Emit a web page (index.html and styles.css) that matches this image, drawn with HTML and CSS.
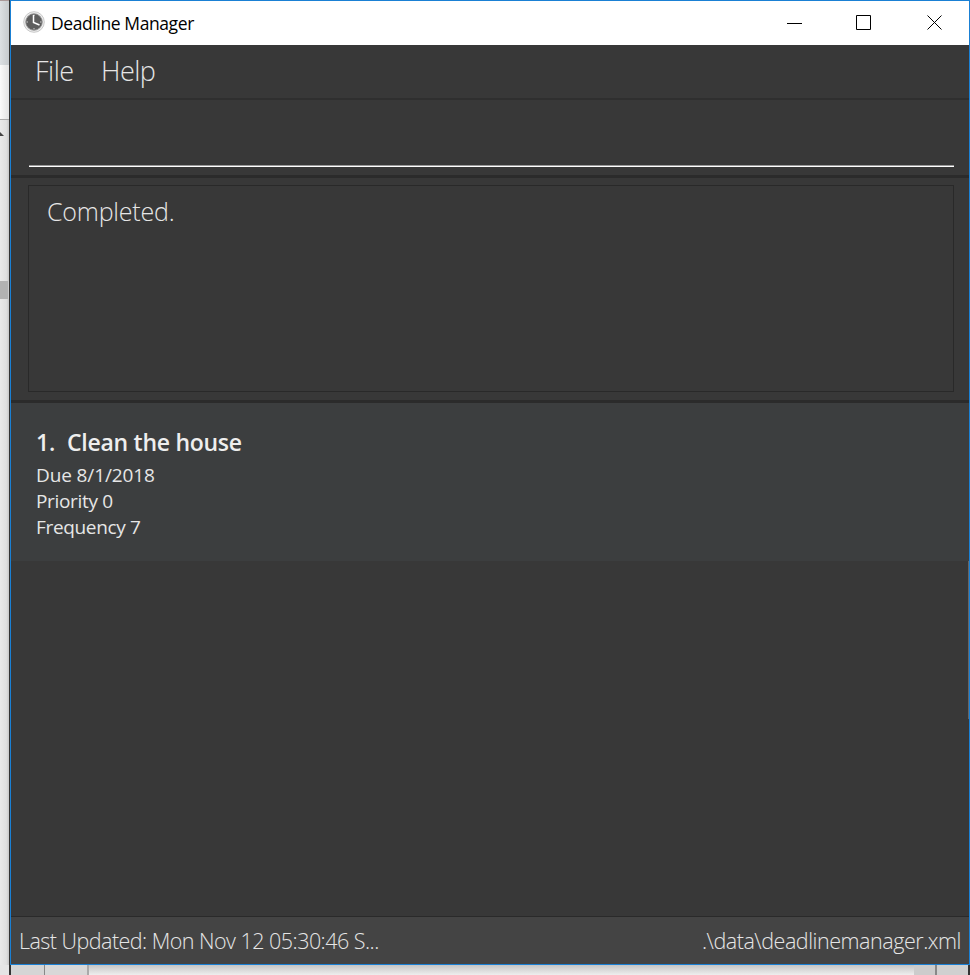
FILE: index.html
```html
<!DOCTYPE html>
<html lang="en">
<head>
<meta charset="utf-8">
<title>Deadline Manager</title>
<link rel="stylesheet" href="styles.css">
</head>
<body>
<div class="desktop">
  <div class="behind-left"><i class="panel-top"></i><i class="panel-line"></i><svg class="arrow" width="4" height="4" viewBox="0 0 4 4"><path d="M0 0L4 4H0Z" fill="#444"/></svg><i class="thumb"></i></div>
  <main class="window">
    <header class="titlebar">
      <svg class="clock" width="22" height="22" viewBox="0 0 22 22">
        <circle cx="11" cy="11" r="10.3" fill="#eee" stroke="#c9c9c9"/>
        <circle cx="11" cy="11" r="8.3" fill="#5e5e5e" stroke="#909090" stroke-width=".8"/>
        <path d="M11 3.500V5M11 17v1.500M3.500 11H5M17 11h1.500" stroke="#ccc" stroke-width="1"/>
        <path d="M10.500 4v7.500l6 2.500" fill="none" stroke="#fff" stroke-width="1.500"/>
      </svg>
      <h1 class="title"><span>Deadline Manager</span></h1>
      <div class="controls">
        <svg width="16" height="16" viewBox="0 0 16 16"><path d="M0 8.500H15" stroke="#000"/></svg>
        <svg width="16" height="16" viewBox="0 0 16 16"><path d="M.5 .5H14.500V14.500H.5Z" fill="none" stroke="#000"/></svg>
        <svg width="16" height="16" viewBox="0 0 16 16"><path d="M.5 .5L14.500 14.500M14.500 .5L.5 14.500" stroke="#000" stroke-width="1"/></svg>
      </div>
    </header>
    <nav class="menubar"><span class="file">File</span><span class="help">Help</span></nav>
    <section class="command"><div class="input"></div></section>
    <section class="result"><div class="result-box"><span>Completed.</span></div></section>
    <section class="list">
      <article class="card">
        <h2 class="card-title"><span class="index">1.</span><span class="name">Clean the house</span></h2>
        <p class="due">Due 8/1/2018</p>
        <p class="priority">Priority 0</p>
        <p class="frequency">Frequency 7</p>
      </article>
      <i class="scroll-edge"></i>
    </section>
    <footer class="status"><span class="updated">Last Updated: Mon Nov 12 05:30:46 S...</span><span class="path">.\data\deadlinemanager.xml</span></footer>
  </main>
  <div class="behind-bottom"><i class="b1"></i><i class="b2"></i><i class="b3"></i><i class="b4"></i><i class="b5"></i></div>
</div>
</body>
</html>
```
FILE: styles.css
```css
* { box-sizing: border-box; }
body { margin: 0; font-family: "Open Sans", "Noto Sans", sans-serif; overflow: hidden; }
h1, h2, p { margin: 0; font-weight: inherit; white-space: nowrap; }
span { white-space: nowrap; }
svg, i { display: block; }
.desktop { width: 970px; height: 975px; display: grid; grid-template: 965px 10px / 10px 960px; background: #e9e9e9; }
.behind-left { position: relative; background: linear-gradient(90deg, #e9e9e9, #dfdfdf 70%, #c8c8c8); border-right: 1px solid #333; }
.panel-top { height: 65px; background: linear-gradient(90deg, #dce0e3, #c6cacd); border-top: 1px solid #a99; }
.panel-line { height: 55px; background: linear-gradient(90deg, #fafafa, #e2e2e2); border-bottom: 1px solid #aaa; }
.arrow { position: absolute; left: 0; top: 132px; }
.thumb { position: absolute; left: 0; top: 281px; width: 8px; height: 18px; background: #b2b2b2; }
.window { border: 1px solid #1a80d4; display: grid; grid-template-rows: 44px 55px 78px 225px 1fr 48px; background: #383838; color: #e6e6e6; }
.titlebar { display: flex; align-items: flex-start; background: #fff; color: #000; padding: 10px 26px 0 12px; }
.title { font-size: 17.500px; line-height: 24px; margin-left: 6px; letter-spacing: -.4px; }
.controls { margin-left: auto; display: flex; padding-top: 4px; gap: 54px; }
.controls svg:nth-child(2) { margin-left: -1px; margin-right: 1px; }
.menubar { display: flex; padding-left: 24px; border-bottom: 2px solid #2f2f2f; font-size: 27px; font-weight: 300; line-height: 51px; letter-spacing: -.5px; }
.file { width: 66px; }
.command { padding: 65px 15px 0 18px; border-bottom: 3px solid #2b2b2b; }
.input { height: 2px; border-top: 1px solid #999; background: #fff; }
.result { padding: 7px 15px 8px 17px; border-bottom: 3px solid #2b2b2b; }
.result-box { height: 207px; border: 1px solid #292929; padding: 7px 18px; font-size: 25px; line-height: 36px; font-weight: 300; letter-spacing: -.2px; }
.list { position: relative; }
.card { height: 158px; background: #3c3e3f; padding: 21px 25px; }
.card-title { display: flex; font-size: 23px; line-height: 36px; font-weight: 600; color: #eee; letter-spacing: -.27px; }
.index { width: 31px; }
.card p { font-size: 19px; line-height: 26px; letter-spacing: -.33px; }
.card .due { padding-top: 2px; letter-spacing: -.12px; }
.scroll-edge { position: absolute; right: 0; top: 158px; width: 1px; height: 158px; background: #666; }
.status { display: flex; justify-content: space-between; background: #444; border-top: 1px solid #2a2a2a; padding: 0 8px; font-size: 21.500px; line-height: 48px; font-weight: 300; }
.updated { letter-spacing: -.53px; }
.path { letter-spacing: -.46px; }
.behind-bottom { grid-column: 1 / 3; display: grid; grid-template-columns: 9px 2px 76px 827px 56px; background: linear-gradient(#c5c5c5, #eee); }
.b1 { background: #e5e5e5; }
.b2 { background: #333; }
.b3 { background: linear-gradient(90deg, #d5d5d5 33px, #888 33px 34px, #d8d8d8 34px); }
.b4 { border-left: 2px solid #aaa; }
.b5 { background: linear-gradient(90deg, #ccc 21px, #888 21px 23px, #d0d0d0 23px 54px, #333 54px); }
```
